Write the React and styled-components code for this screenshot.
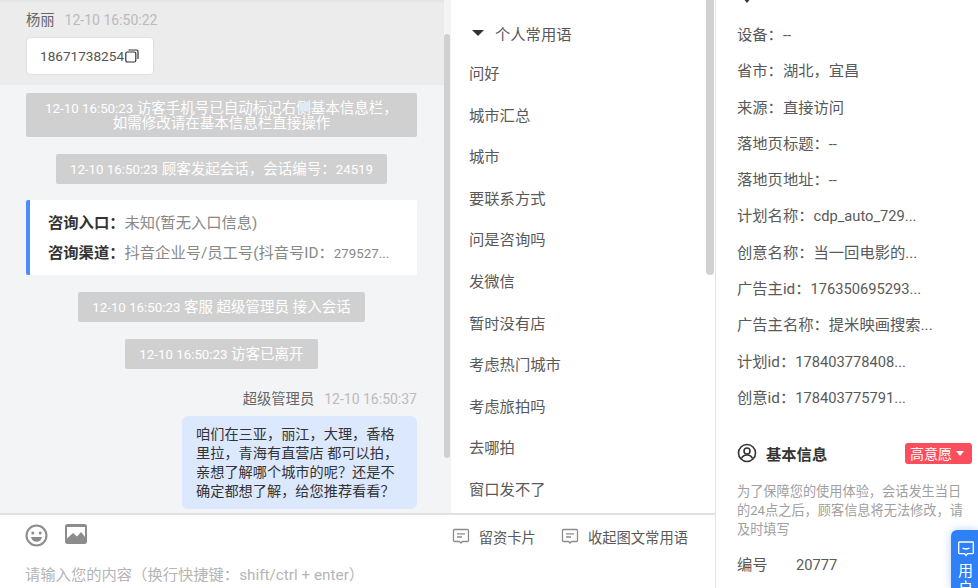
import styled, { createGlobalStyle } from 'styled-components';

const phrases = ['问好', '城市汇总', '城市', '要联系方式', '问是咨询吗', '发微信', '暂时没有店', '考虑热门城市', '考虑旅拍吗', '去哪拍', '窗口发不了'];

const details = [
  { label: '设备\uFF1A', value: '--', num: true },
  { label: '省市\uFF1A', value: '湖北\uFF0C宜昌' },
  { label: '来源\uFF1A', value: '直接访问' },
  { label: '落地页标题\uFF1A', value: '--', num: true },
  { label: '落地页地址\uFF1A', value: '--', num: true },
  { label: '计划名称\uFF1A', value: 'cdp_auto_729...', num: true },
  { label: '创意名称\uFF1A', value: '当一回电影的...' },
  { label: '广告主id\uFF1A', value: '176350695293...', num: true },
  { label: '广告主名称\uFF1A', value: '提米映画搜索...' },
  { label: '计划id\uFF1A', value: '178403778408...', num: true },
  { label: '创意id\uFF1A', value: '178403775791...', num: true },
];

const CommentIcon = () => (
  <svg width="18" height="17" viewBox="0 0 18 17" fill="none" stroke="#8c8c8c" strokeWidth="1.3">
    <path d="M2.5 1.5h13a1 1 0 0 1 1 1v10a1 1 0 0 1-1 1h-5l-1.500 1.500-1.500-1.500h-5a1 1 0 0 1-1-1v-10a1 1 0 0 1 1-1z" />
    <path d="M5 5.800h8M5 9h5" />
  </svg>
);

const App = () => {
  return (
    <Page>
      <GlobalStyle />
      <Main>
        <Top>
          <Chat>
            <ThumbLeft />
            <Incoming>
              <Meta>
                <Name>杨丽</Name>
                <Time>12-10 16:50:22</Time>
              </Meta>
              <PhoneCard>
                18671738254
                <svg width="14" height="14" viewBox="0 0 14 14" fill="none" stroke="#333" strokeWidth="1.200">
                  <rect x="0.800" y="3" width="10" height="10" rx="1.500" />
                  <path d="M3.500 1h8a1.500 1.500 0 0 1 1.500 1.500V10" />
                </svg>
              </PhoneCard>
            </Incoming>
            <Log>
              <Notice $wide>
                <Stamp>12-10 16:50:23</Stamp> {'访客手机号已自动标记右侧基本信息栏\uFF0C'}
                <br />
                如需修改请在基本信息栏直接操作
              </Notice>
              <Notice>
                <Stamp>12-10 16:50:23</Stamp> {'顾客发起会话\uFF0C会话编号\uFF1A'}
                <Stamp>24519</Stamp>
              </Notice>
              <EntryCard>
                <EntryRow>
                  <b>{'咨询入口\uFF1A'}</b>
                  {'未知(暂无入口信息)'}
                </EntryRow>
                <EntryRow>
                  <b>{'咨询渠道\uFF1A'}</b>
                  {'抖音企业号/员工号(抖音号ID\uFF1A'}
                  <Stamp>279527...</Stamp>
                </EntryRow>
              </EntryCard>
              <Notice>
                <Stamp>12-10 16:50:23</Stamp> 客服 超级管理员 接入会话
              </Notice>
              <Notice>
                <Stamp>12-10 16:50:23</Stamp> 访客已离开
              </Notice>
              <Outgoing>
                <Meta>
                  <Name>超级管理员</Name>
                  <Time>12-10 16:50:37</Time>
                </Meta>
                <Bubble>
                  {'咱们在三亚\uFF0C丽江\uFF0C大理\uFF0C香格里拉\uFF0C青海有直营店 都可以拍\uFF0C亲想了解哪个城市的呢\uFF1F还是不确定都想了解\uFF0C给您推荐看看\uFF1F'}
                </Bubble>
              </Outgoing>
            </Log>
          </Chat>
          <Phrases>
            <ThumbMiddle />
            <GroupTitle>
              <Caret />
              个人常用语
            </GroupTitle>
            {phrases.map((p) => (
              <Phrase key={p}>{p}</Phrase>
            ))}
          </Phrases>
        </Top>
        <Composer>
          <ToolRow>
            <Tools>
              <svg width="23" height="23" viewBox="0 0 23 23" fill="none">
                <circle cx="11.500" cy="11.500" r="10" stroke="#8c8c8c" strokeWidth="2" />
                <circle cx="7.800" cy="9" r="1.500" fill="#8c8c8c" />
                <circle cx="15.200" cy="9" r="1.500" fill="#8c8c8c" />
                <path d="M6 13h11c-.5 3-2.700 4.800-5.500 4.800S6.500 16 6 13z" fill="#8c8c8c" />
              </svg>
              <svg width="22" height="20" viewBox="0 0 22 20">
                <rect width="22" height="20" rx="2.500" fill="#8c8c8c" />
                <path d="M2 3h18v10l-4-5-4 4.500-4-3.500-6 5.500z" fill="#fff" />
              </svg>
            </Tools>
            <Actions>
              <Action>
                <CommentIcon />
                留资卡片
              </Action>
              <Action>
                <CommentIcon />
                收起图文常用语
              </Action>
            </Actions>
          </ToolRow>
          <Placeholder>
            {'请输入您的内容\uFF08换行快捷键\uFF1Ashift/ctrl + enter\uFF09'}
          </Placeholder>
        </Composer>
      </Main>
      <Side>
        <Chevron />
        {details.map((d) => (
          <Detail key={d.label}>
            {d.label}
            {d.num ? <Latin>{d.value}</Latin> : d.value}
          </Detail>
        ))}
        <SectionHead>
          <SectionTitle>
            <svg width="20" height="20" viewBox="0 0 20 20" fill="none" stroke="#333" strokeWidth="1.600">
              <circle cx="10" cy="10" r="8.500" />
              <circle cx="10" cy="8" r="3" />
              <path d="M4.500 15.500c1-2.500 3-3.500 5.500-3.500s4.500 1 5.500 3.500" />
            </svg>
            基本信息
          </SectionTitle>
          <Intent>
            高意愿
            <SmallCaret />
          </Intent>
        </SectionHead>
        <Hint>{'为了保障您的使用体验\uFF0C会话发生当日的24点之后\uFF0C顾客信息将无法修改\uFF0C请及时填写'}</Hint>
        <Field>
          <FieldLabel>编号</FieldLabel>
          <Latin>20777</Latin>
        </Field>
        <Floater>
          <svg width="16" height="16" viewBox="0 0 16 16" fill="none" stroke="#fff" strokeWidth="1.300">
            <path d="M1.500 1h13a.8.8 0 0 1 .8.8v10a.8.8 0 0 1-.8.8h-5L8 14.500l-1.500-1.900h-5a.8.8 0 0 1-.8-.8v-10a.8.8 0 0 1 .8-.8z" />
            <path d="M4.500 7c1.500 1.300 5.500 1.300 7 0" />
          </svg>
          <FloaterText>用户</FloaterText>
        </Floater>
      </Side>
    </Page>
  );
};

export default App;

const GlobalStyle = createGlobalStyle`
  html, body {
    margin: 0;
    padding: 0;
    height: 100%;
    overflow: hidden;
    background: #fff;
  }
  body {
    font-family: Roboto, "Noto Sans CJK SC", "Noto Sans", sans-serif;
    font-size: 15.300px;
    color: #595959;
  }
`;

const Page = styled.div`
  display: flex;
  width: 978px;
  height: 588px;
  overflow: hidden;
`;

const Main = styled.div`
  width: 715px;
  height: 588px;
  display: flex;
  flex-direction: column;
  flex-shrink: 0;
`;

const Top = styled.div`
  display: flex;
  height: 513px;
  overflow: hidden;
`;

const Chat = styled.div`
  position: relative;
  width: 451px;
  flex-shrink: 0;
  background: #f3f4f6;
`;

const ThumbLeft = styled.div`
  position: absolute;
  left: 444px;
  top: 34px;
  width: 6px;
  height: 424px;
  border-radius: 3px;
  background: #d0d0d0;
`;

const ThumbMiddle = styled.div`
  position: absolute;
  left: 255px;
  top: 0;
  width: 8px;
  height: 275px;
  border-radius: 0 0 4px 4px;
  background: #d0d0d0;
`;

const Incoming = styled.div`
  height: 85px;
  box-sizing: border-box;
  padding: 10px 0 0 26px;
  margin-right: 7px;
  background: #ececec;
  box-shadow: inset 0 3px 3px -2px #e0e0e0;
`;

const Meta = styled.div`
  display: flex;
  align-items: center;
  gap: 10px;
  height: 20px;
  font-size: 14.300px;
  line-height: 20px;
`;

const Name = styled.span`
  color: #666;
`;

const Time = styled.span`
  color: #bbb;
  font-size: 14px;
`;

const PhoneCard = styled.div`
  display: flex;
  align-items: center;
  gap: 1px;
  width: 128px;
  height: 38px;
  box-sizing: border-box;
  margin-top: 7px;
  padding-left: 13px;
  background: #fff;
  border: 1px solid #e0e0e0;
  border-radius: 4px;
  color: #555;
  font-size: 13.600px;
`;

const Log = styled.div`
  display: flex;
  flex-direction: column;
  align-items: center;
  gap: 17px;
  width: 391px;
  margin: 8px 0 0 26px;
`;

const Notice = styled.div`
  box-sizing: border-box;
  padding: 8px 14px 6px;
  width: ${(p) => (p.$wide ? '100%' : 'auto')};
  line-height: ${(p) => (p.$wide ? '15px' : '16px')};
  background: #d0d0d0;
  border-radius: 2px;
  color: #fff;
  font-size: 14.500px;
  text-align: center;
  white-space: nowrap;
`;

const Stamp = styled.span`
  font-size: 13.300px;
`;

const Latin = styled.span`
  font-size: 14.700px;
`;

const EntryCard = styled.div`
  align-self: stretch;
  box-sizing: border-box;
  height: 75px;
  margin-top: -1px;
  padding: 12px 0 0 18px;
  display: flex;
  flex-direction: column;
  gap: 8px;
  background: #fff;
  border-left: 4px solid #4d8dfb;
  border-radius: 2px;
  color: #888;
`;

const EntryRow = styled.div`
  line-height: 22px;
  white-space: nowrap;
  b {
    color: #333;
    font-weight: 700;
  }
`;

const Outgoing = styled.div`
  align-self: stretch;
  display: flex;
  flex-direction: column;
  align-items: flex-end;
  gap: 7px;
  margin-top: 3px;
`;

const Bubble = styled.div`
  box-sizing: border-box;
  width: 235px;
  height: 93px;
  padding: 9px 14px;
  background: #dce8fd;
  border-radius: 6px;
  color: #333;
  font-size: 14.200px;
  line-height: 19px;
`;

const Phrases = styled.div`
  position: relative;
  flex: 1;
  padding: 0 0 0 18px;
  background: #fff;
`;

const GroupTitle = styled.div`
  display: flex;
  align-items: center;
  gap: 11px;
  height: 20px;
  margin: 23px 0 11px 2px;
  color: #595959;
`;

const Caret = styled.span`
  width: 0;
  height: 0;
  margin-left: 1px;
  border-left: 6px solid transparent;
  border-right: 6px solid transparent;
  border-top: 6px solid #333;
`;

const Phrase = styled.div`
  height: 41.600px;
  line-height: 41.600px;
`;

const Composer = styled.div`
  flex: 1;
  box-sizing: border-box;
  border-top: 2px solid #e0e0e0;
  padding: 9px 27px 0 25px;
  background: #fff;
`;

const ToolRow = styled.div`
  display: flex;
  justify-content: space-between;
  align-items: flex-start;
`;

const Tools = styled.div`
  display: flex;
  align-items: flex-start;
  gap: 17px;
`;

const Actions = styled.div`
  display: flex;
  gap: 25px;
  margin-top: 1px;
`;

const Action = styled.div`
  display: flex;
  align-items: center;
  gap: 9px;
  height: 22px;
  font-size: 14.300px;
`;

const Placeholder = styled.div`
  margin-top: 18px;
  line-height: 20px;
  color: #b5b5b5;
`;

const Side = styled.div`
  position: relative;
  flex: 1;
  box-sizing: border-box;
  padding: 17px 6px 0 21px;
  border-left: 1px solid #e4e4e4;
`;

const Chevron = styled.span`
  position: absolute;
  left: 27px;
  top: -2px;
  width: 0;
  height: 0;
  border-left: 4px solid transparent;
  border-right: 4px solid transparent;
  border-top: 5px solid #333;
`;

const Detail = styled.div`
  height: 36.300px;
  line-height: 36px;
  white-space: nowrap;
`;

const SectionHead = styled.div`
  display: flex;
  align-items: center;
  justify-content: space-between;
  height: 22px;
  margin-top: 26px;
`;

const SectionTitle = styled.div`
  display: flex;
  align-items: center;
  gap: 9px;
  font-weight: 700;
  color: #333;
`;

const Intent = styled.div`
  display: flex;
  align-items: center;
  gap: 4px;
  height: 21px;
  padding: 0 8px 0 5px;
  background: #fb4d5c;
  border-radius: 3px;
  color: #fff;
  font-size: 14px;
`;

const SmallCaret = styled.span`
  width: 0;
  height: 0;
  border-left: 4.500px solid transparent;
  border-right: 4.500px solid transparent;
  border-top: 5px solid #fff;
`;

const Hint = styled.div`
  width: 232px;
  margin-top: 18px;
  font-size: 13.200px;
  line-height: 19px;
  color: #a0a0a0;
`;

const Field = styled.div`
  display: flex;
  margin-top: 16px;
  line-height: 20px;
`;

const FieldLabel = styled.span`
  width: 59px;
`;

const Floater = styled.div`
  position: absolute;
  left: 235px;
  top: 530px;
  width: 27px;
  height: 58px;
  box-sizing: border-box;
  padding: 11px 0 0 7px;
  overflow: hidden;
  background: #2f80f7;
  border-radius: 6px 0 0 0;
  box-shadow: 0 0 8px rgba(47, 128, 247, 0.35);
`;

const FloaterText = styled.div`
  width: 15px;
  margin-top: 2px;
  font-size: 15px;
  line-height: 17px;
  color: #fff;
`;
